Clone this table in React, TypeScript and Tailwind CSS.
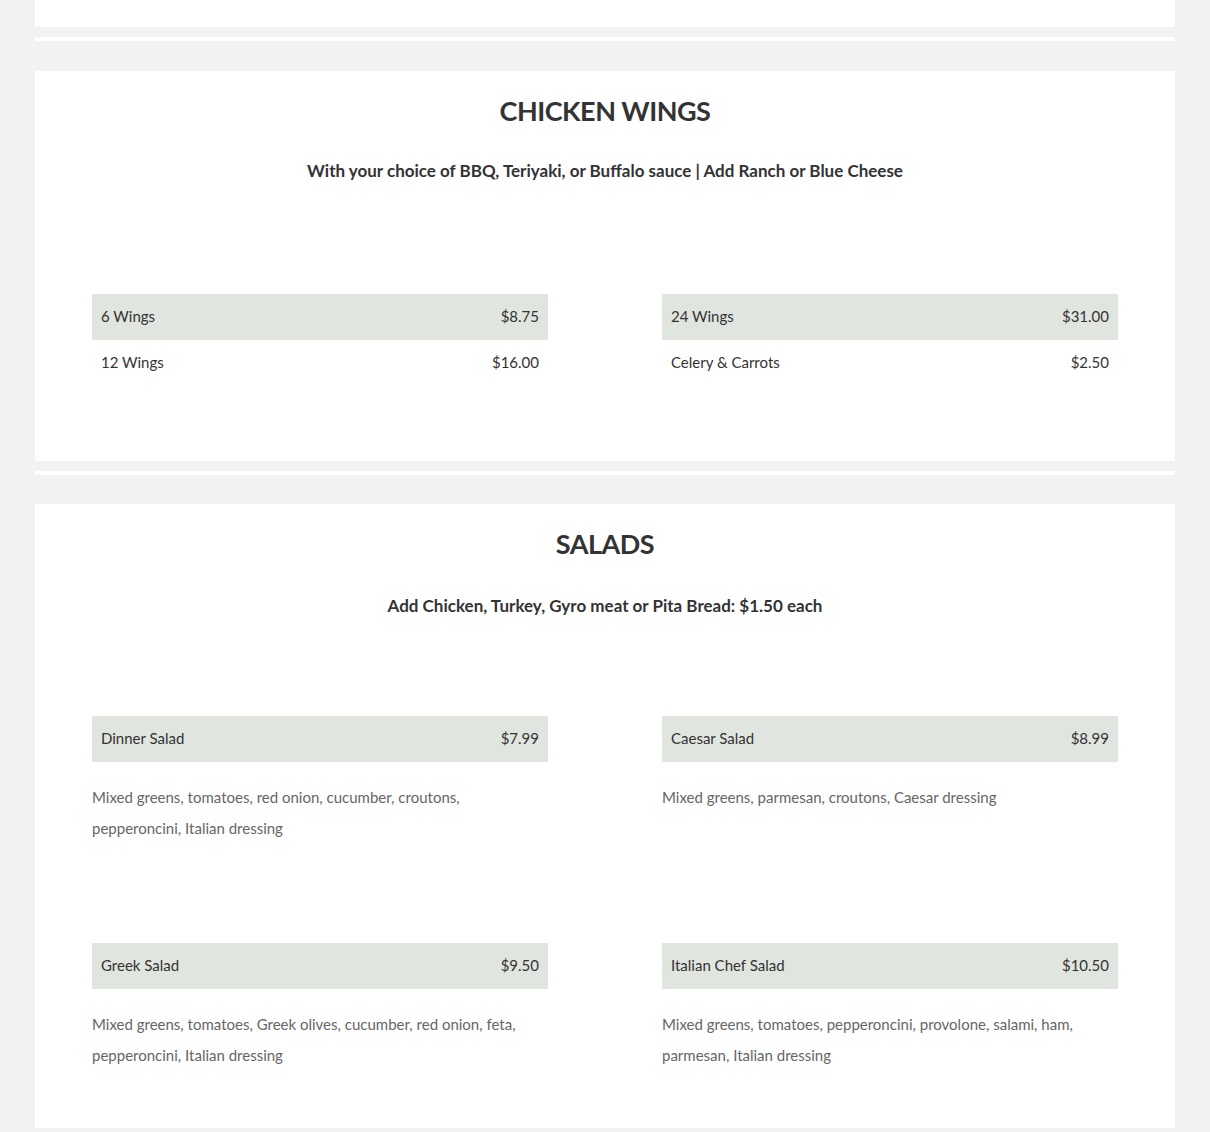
const FONT = "font-['Lato','Open_Sans',sans-serif]";

type Item = { name: string; price: string; desc?: string };

const wings: Item[][] = [
  [
    { name: '6 Wings', price: '$8.75' },
    { name: '12 Wings', price: '$16.00' },
  ],
  [
    { name: '24 Wings', price: '$31.00' },
    { name: 'Celery & Carrots', price: '$2.50' },
  ],
];

const salads: Item[] = [
  {
    name: 'Dinner Salad',
    price: '$7.99',
    desc: 'Mixed greens, tomatoes, red onion, cucumber, croutons, pepperoncini, Italian dressing',
  },
  { name: 'Caesar Salad', price: '$8.99', desc: 'Mixed greens, parmesan, croutons, Caesar dressing' },
  {
    name: 'Greek Salad',
    price: '$9.50',
    desc: 'Mixed greens, tomatoes, Greek olives, cucumber, red onion, feta, pepperoncini, Italian dressing',
  },
  {
    name: 'Italian Chef Salad',
    price: '$10.50',
    desc: 'Mixed greens, tomatoes, pepperoncini, provolone, salami, ham, parmesan, Italian dressing',
  },
];

function PriceRow({ item, shaded }: { item: Item; shaded?: boolean }) {
  return (
    <div
      className={`flex h-[46px] items-center justify-between pl-[9px] pr-[9px] pb-[1px] text-[15px] text-[#333] ${
        shaded ? 'bg-[#e1e5e0]' : ''
      }`}
    >
      <span>{item.name}</span>
      <span>{item.price}</span>
    </div>
  );
}

function SectionHeading({ title, note, gap }: { title: string; note: string; gap: string }) {
  return (
    <div className="text-center text-[#333]">
      <h2 className="text-[27px] font-bold leading-[36px] tracking-[-0.5px]">{title}</h2>
      <p className={`${gap} text-[17px] font-bold leading-[24px]`}>{note}</p>
    </div>
  );
}

function Spacer() {
  return (
    <div>
      <div className="h-[10px]" />
      <div className="h-[4px] bg-white" />
    </div>
  );
}

export default function App() {
  return (
    <div className={`min-h-screen bg-[#f2f2f2] ${FONT}`}>
      <div className="mx-auto w-[1140px]">
        <div className="h-[27px] bg-white" />
        <Spacer />

        <section className="mt-[30px] bg-white px-[57px] pt-[22px] pb-[75px]">
          <SectionHeading
            title="CHICKEN WINGS"
            note="With your choice of BBQ, Teriyaki, or Buffalo sauce | Add Ranch or Blue Cheese"
            gap="mt-[30px]"
          />
          <div className="mt-[111px] grid grid-cols-2 gap-x-[114px]">
            {wings.map((col, i) => (
              <div key={i}>
                {col.map((item, j) => (
                  <PriceRow key={item.name} item={item} shaded={j === 0} />
                ))}
              </div>
            ))}
          </div>
        </section>

        <Spacer />

        <section className="mt-[29px] bg-white px-[57px] pt-[22px] pb-[58px]">
          <SectionHeading
            title="SALADS"
            note="Add Chicken, Turkey, Gyro meat or Pita Bread: $1.50 each"
            gap="mt-[32px]"
          />
          <div className="mt-[98px] grid grid-cols-2 gap-x-[114px] gap-y-[100px]">
            {salads.map((item) => (
              <div key={item.name} className="h-[127px]">
                <PriceRow item={item} shaded />
                <p className="mt-[20px] text-[15px] leading-[31px] text-[#666]">{item.desc}</p>
              </div>
            ))}
          </div>
        </section>

        <div className="h-[4px]" />
      </div>
    </div>
  );
}
